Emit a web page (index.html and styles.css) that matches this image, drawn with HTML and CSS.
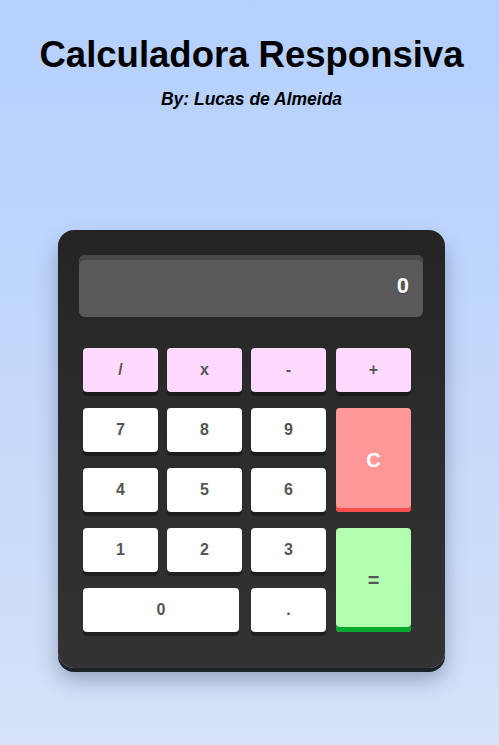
FILE: index.html
```html
<!DOCTYPE html>
<html lang="pt-BR">
<head>
<meta charset="utf-8">
<title>Calculadora Responsiva</title>
<link rel="stylesheet" href="styles.css">
</head>
<body>
  <header class="header">
    <h1 class="title">Calculadora Responsiva</h1>
    <p class="author">By: Lucas de Almeida</p>
  </header>
  <main class="calculator">
    <div class="display">0</div>
    <div class="keys">
      <button class="key op">/</button>
      <button class="key op">x</button>
      <button class="key op">-</button>
      <button class="key op">+</button>
      <button class="key">7</button>
      <button class="key">8</button>
      <button class="key">9</button>
      <button class="key clear">C</button>
      <button class="key">4</button>
      <button class="key">5</button>
      <button class="key">6</button>
      <button class="key">1</button>
      <button class="key">2</button>
      <button class="key">3</button>
      <button class="key equal">=</button>
      <button class="key zero">0</button>
      <button class="key">.</button>
    </div>
  </main>
</body>
</html>
```
FILE: styles.css
```css
html, body {
  margin: 0;
  padding: 0;
}
body {
  min-height: 745px;
  background: linear-gradient(180deg, #b4d0fe 0%, #c3d8fb 50%, #d5e2f8 100%);
  font-family: "Liberation Sans", Arial, sans-serif;
  padding: 33px 0 0 4px;
  box-sizing: border-box;
}
.header {
  text-align: center;
}
.title {
  margin: 0;
  font-size: 36.5px;
  font-weight: bold;
  line-height: 43px;
  color: #000;
}
.author {
  margin: 13px 0 0;
  font-size: 17.5px;
  font-weight: bold;
  font-style: italic;
  line-height: 20px;
  color: #000;
}
.calculator {
  width: 387px;
  margin: 121px auto 0;
  box-sizing: border-box;
  padding: 25px 22px 36px 21px;
  border-radius: 16px;
  background: linear-gradient(180deg, #242424 0%, #2b2b2b 40%, #333333 100%);
  box-shadow: 0 4px 0 #1e2329, 0 12px 20px rgba(40, 50, 80, 0.35);
}
.display {
  height: 62px;
  border-radius: 6px;
  background: #595959;
  box-shadow: inset 0 5px 0 #484848;
  color: #fff;
  font-family: "Liberation Sans", Arial, sans-serif;
  font-weight: bold;
  font-size: 22px;
  line-height: 62px;
  text-align: right;
  padding-right: 14px;
  text-shadow: 0 1px 1px rgba(0, 0, 0, 0.3);
}
.keys {
  margin-top: 31px;
  padding-left: 4px;
  display: grid;
  grid-template-columns: 75px 75px 75px 76px;
  grid-auto-rows: 44px;
  column-gap: 9px;
  row-gap: 16px;
}
.key {
  border: none;
  border-radius: 4px;
  background: #fff;
  color: #555;
  font-family: "Liberation Sans", Arial, sans-serif;
  font-weight: bold;
  font-size: 16px;
  padding: 0;
  box-shadow: 0 4px 1px rgba(0, 0, 0, 0.35);
}
.op {
  background: #ffd9ff;
}
.clear {
  grid-column: 4;
  grid-row: 2 / span 2;
  background: #ff9999;
  color: #fff;
  font-size: 20px;
  box-shadow: inset 0 -4px 0 #ff4d4d;
}
.equal {
  grid-column: 4;
  grid-row: 4 / span 2;
  background: #b3ffb0;
  color: #555;
  font-size: 20px;
  box-shadow: inset 0 -5px 0 #00a82d;
}
.clear, .equal, .keys > .key:nth-child(4) {
  width: 75px;
  justify-self: end;
}
.zero {
  grid-column: 1 / span 2;
  width: 156px;
}
```
